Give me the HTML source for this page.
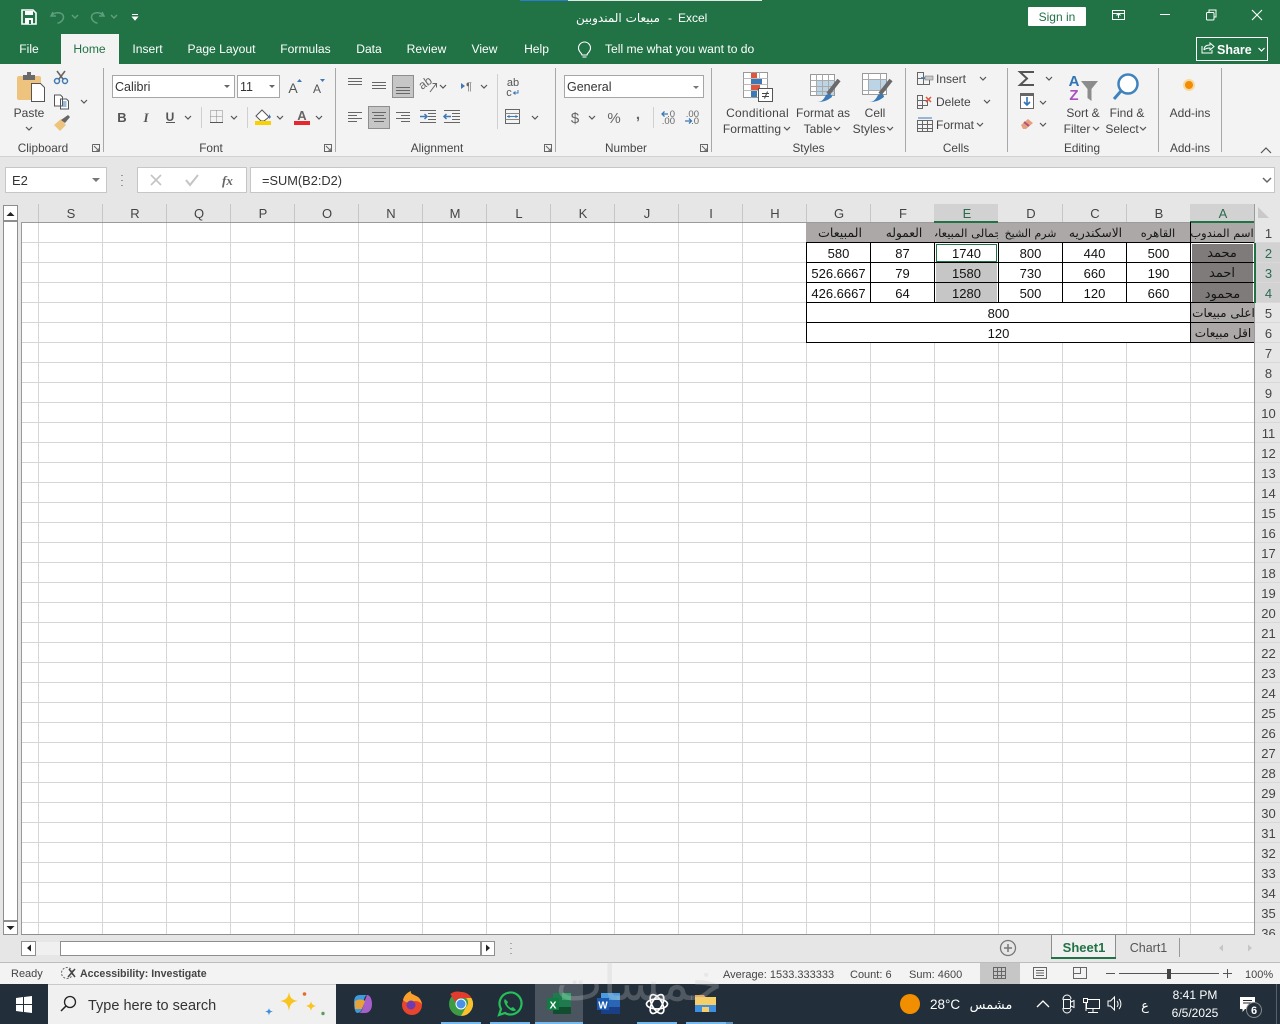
<!DOCTYPE html>
<html lang="en"><head><meta charset="utf-8"><title>Excel</title>
<style>
html,body{margin:0;padding:0;width:1280px;height:1024px;overflow:hidden;background:#e6e6e6}
svg{position:absolute;left:0;top:0;display:block}
text{font-family:"Liberation Sans",sans-serif;font-size:12px;fill:#3c3c3c;white-space:pre}
.m{text-anchor:middle}
.e{text-anchor:end}
.w{fill:#fff}
.tab{fill:#fff;font-size:12.1px;text-anchor:middle}
.rb{font-size:12px;fill:#444;text-anchor:middle}
.gl{font-size:11.8px;fill:#444;text-anchor:middle}
.ch{font-size:13px;fill:#444;text-anchor:middle}
.rh{font-size:13px;fill:#444;text-anchor:middle}
.rs{font-size:13px;fill:#2c6a50;text-anchor:middle}
.n{font-size:13px;fill:#111;text-anchor:middle}
.ar{font-family:"DejaVu Sans","Liberation Sans",sans-serif;font-size:11.5px;fill:#151515;text-anchor:middle}
.st{font-size:11px;fill:#444}
.chev{fill:none;stroke:#555;stroke-width:1.2}
.l{fill:none;stroke:#666;stroke-width:1}
</style></head>
<body>
<svg width="1280" height="1024" viewBox="0 0 1280 1024" xmlns="http://www.w3.org/2000/svg">
<defs>
<pattern id="grid" x="38" y="222" width="64" height="20" patternUnits="userSpaceOnUse"><rect width="1" height="20" fill="#d6d6d6"/><rect width="64" height="1" fill="#d6d6d6"/></pattern>
<clipPath id="ce"><rect x="935" y="223" width="63" height="19"/></clipPath>
<clipPath id="ca"><rect x="1191" y="223" width="63" height="19"/></clipPath>
<path id="c" d="M0 0l3 3 3-3" class="chev"/>
</defs>

<!-- base -->
<rect width="1280" height="64" fill="#217346"/>
<rect x="520" width="48" height="1" fill="#2b7cd3"/><rect x="568" width="194" height="1" fill="#dfe8e3"/>
<rect y="64" width="1280" height="92" fill="#f3f3f3"/>
<rect y="156" width="1280" height="1" fill="#d2d2d2"/>
<rect y="157" width="1280" height="47" fill="#e6e6e6"/>

<!-- Title bar -->
<g transform="translate(22,10)"><path d="M0 0h11l3 3v11H0z" fill="none" stroke="#fff" stroke-width="1.600"/><rect x="3" y="1" width="8" height="4" fill="#fff"/><rect x="3" y="8" width="8" height="6" fill="#fff"/><rect x="7" y="10" width="2" height="4" fill="#217346"/></g>
<g fill="none" stroke="#5f9e7c" stroke-width="1.500"><path d="M53 12l-2 4 5 0M51.500 16c3-5 12-4 12 1 0 3-3 6-6 6"/><path d="M102 12l2 4-5 0M103.500 16c-3-5-12-4-12 1 0 3 3 6 6 6"/><path d="M72 15l3 3 3-3M111 15l3 3 3-3"/></g>
<path d="M132 14.500h6M132.500 17h5l-2.500 3z" stroke="#fff" fill="#fff" stroke-width="1"/>
<text class="ar" x="618" y="22" style="fill:#fff;font-size:12px">مبيعات المندوبين</text>
<text x="668" y="22" class="w">-</text><text x="678" y="22" class="w" style="font-size:12px">Excel</text>
<rect x="1028" y="7" width="58" height="19" rx="1" fill="#fff"/><text x="1057" y="21" class="m" style="fill:#217346;font-size:12px">Sign in</text>
<g fill="none" stroke="#fff"><rect x="1112.500" y="10.500" width="12" height="9"/><path d="M1112.500 13.500h12M1118.500 18v-4M1116.500 15.500l2-2 2 2"/><path d="M1160 14.500h10"/><rect x="1206.500" y="12.500" width="7.500" height="7.500" rx="1"/><path d="M1209 12v-2h7v7h-2"/><path d="M1252 10l10 10M1262 10l-10 10" stroke-width="1.100"/></g>

<!-- Tabs -->
<rect x="61" y="34" width="58" height="30" fill="#f3f3f3"/>
<text class="tab" x="29" y="53">File</text>
<text class="tab" x="89.500" y="53" style="fill:#217346">Home</text>
<text class="tab" x="147.500" y="53">Insert</text>
<text class="tab" x="221.500" y="53">Page Layout</text>
<text class="tab" x="305.500" y="53">Formulas</text>
<text class="tab" x="369" y="53">Data</text>
<text class="tab" x="426.500" y="53">Review</text>
<text class="tab" x="484.500" y="53">View</text>
<text class="tab" x="536.500" y="53">Help</text>
<path d="M582 55c0-2-3.500-3-3.500-7a6 6 0 0 1 12 0c0 4-3.500 5-3.500 7zM582.500 57h4" fill="none" stroke="#fff" stroke-width="1.100"/>
<text x="605" y="53" class="w" style="font-size:12.1px">Tell me what you want to do</text>
<rect x="1196.500" y="37.500" width="71" height="23" fill="none" stroke="#fff"/>
<path d="M1202 46v7h10v-3M1204 50c0-4 3-5 6-5v-2l4 3.500-4 3.500v-2c-2 0-4 0-6 2" fill="none" stroke="#fff"/>
<text x="1217" y="54" class="w" style="font-size:12.500px;font-weight:bold">Share</text>
<path d="M1258.500 48l3 3 3-3" fill="none" stroke="#fff" stroke-width="1.200"/>

<!-- Ribbon seps -->
<g fill="#a8a8a8"><rect x="103" y="68" width="1" height="84"/><rect x="335" y="68" width="1" height="84"/><rect x="555" y="68" width="1" height="84"/><rect x="711" y="68" width="1" height="84"/><rect x="905" y="68" width="1" height="84"/><rect x="1007" y="68" width="1" height="84"/><rect x="1158" y="68" width="1" height="84"/><rect x="1221" y="68" width="1" height="84"/></g>
<g fill="#d0d0d0"><rect x="201" y="107" width="1" height="21"/><rect x="247" y="107" width="1" height="21"/><rect x="497" y="74" width="1" height="55"/><rect x="653" y="107" width="1" height="21"/></g>

<!-- Clipboard -->
<rect x="17" y="76" width="24" height="24" rx="2" fill="#eec37e"/><rect x="23" y="75" width="12" height="5" fill="#6b6b6b"/><rect x="27" y="72" width="4" height="4" fill="#6b6b6b"/>
<path d="M31.500 83.500h9l4 4v14h-13z" fill="#fff" stroke="#555"/>
<text class="rb" x="29" y="117">Paste</text><use href="#c" x="26" y="127"/>
<g fill="none" stroke="#3d79b5" stroke-width="1.500"><circle cx="57" cy="81" r="2.500"/><circle cx="65" cy="81" r="2.500"/></g><path d="M57 71l6 8M65 71l-6 8" stroke="#666" stroke-width="1.600"/>
<path d="M54.500 95h6l2 2v9h-8zM60.500 99h6l2 2v8h-8z" fill="#fff" stroke="#555"/><path d="M62.500 102h4M62.500 104h4M62.500 106h4" stroke="#3d79b5"/>
<use href="#c" x="81" y="100"/>
<path d="M54 125l7-6 5 6-6 6z" fill="#eec37e"/><path d="M61 120l7-5 2 2-5 6z" fill="#666"/>
<text class="gl" x="43" y="152">Clipboard</text>
<path d="M92.500 144.500h7v7M92.500 144.500v7h7M94 146l5 5M99 148v3h-3" fill="none" stroke="#666"/>

<!-- Font -->
<rect x="112.500" y="75.500" width="122" height="22" fill="#fff" stroke="#a6a6a6"/><text x="115" y="91" style="font-size:12.500px;fill:#333">Calibri</text><path d="M224 85h6l-3 3z" fill="#666"/>
<rect x="237.500" y="75.500" width="42" height="22" fill="#fff" stroke="#a6a6a6"/><text x="240" y="91" style="font-size:12.500px;fill:#333">11</text><path d="M269 85h6l-3 3z" fill="#666"/>
<text x="293" y="93" class="m" style="font-size:14px;fill:#555">A</text><path d="M297 82h5l-2.500-3z" fill="#3d79b5"/>
<text x="317" y="93" class="m" style="font-size:12px;fill:#555">A</text><path d="M320 79h5l-2.500 3z" fill="#3d79b5"/>
<text x="122" y="122" class="m" style="font-weight:bold;font-size:13px;fill:#555">B</text>
<text x="146" y="122" class="m" style="font-style:italic;font-size:13px;font-family:'Liberation Serif',serif;font-weight:bold;fill:#555">I</text>
<text x="170" y="121" class="m" style="font-weight:bold;font-size:12px;fill:#555">U</text><rect x="166" y="122" width="9" height="1" fill="#555"/>
<use href="#c" x="185" y="116"/>
<path d="M210.500 110.500h12v12h-12zM216.500 110.500v12M210.500 116.500h12" fill="none" stroke="#888" stroke-dasharray="1 1"/><rect x="210" y="122" width="13" height="1" fill="#555"/>
<use href="#c" x="231" y="116"/>
<path d="M256 116l6-6 7 7-5 4h-3z" fill="#fff" stroke="#555"/><path d="M269 114l2 3-2 2z" fill="#3d79b5"/><rect x="255" y="121" width="16" height="4" fill="#f9d000"/>
<use href="#c" x="277" y="116"/>
<text x="302" y="120" class="m" style="font-weight:bold;font-size:13px;fill:#666">A</text><rect x="294" y="121" width="16" height="4" fill="#e8262d"/>
<use href="#c" x="316" y="116"/>
<text class="gl" x="211" y="152">Font</text>
<path d="M324.500 144.500h7v7h-7zM326 146l5 5M331 148v3h-3" fill="none" stroke="#666"/>

<!-- Alignment -->
<rect x="392.500" y="75.500" width="21" height="22" fill="#c6c6c6" stroke="#8e8e8e"/><rect x="368.500" y="106.500" width="21" height="22" fill="#c6c6c6" stroke="#8e8e8e"/>
<g class="l" stroke="#666"><path d="M348 78.500h14M348 81.500h14M348 84.500h14M372 82.500h14M372 85.500h14M372 88.500h14M396 87.500h14M396 90.500h14M396 93.500h14"/>
<path d="M348 112.500h14M348 115.500h9M348 118.500h14M348 121.500h9M372 112.500h14M374 115.500h10M372 118.500h14M374 121.500h10M396 112.500h14M401 115.500h9M396 118.500h14M401 121.500h9"/>
<path d="M420 110.500h16M428 113.500h8M428 116.500h8M428 119.500h8M420 122.500h16M444 110.500h16M452 113.500h8M452 116.500h8M452 119.500h8M444 122.500h16"/></g>
<path d="M420 116.500h7M424.500 114l2.500 2.500-2.500 2.500" fill="none" stroke="#3d79b5" stroke-width="1.500"/>
<path d="M451 116.500h-7M446.500 114l-2.500 2.500 2.500 2.500" fill="none" stroke="#3d79b5" stroke-width="1.500"/>
<text x="422" y="90" style="font-size:12px;fill:#666" transform="rotate(-35 422 90)">ab</text><path d="M430 92l6-8M432.500 83.500h4v4" fill="none" stroke="#666"/>
<use href="#c" x="440" y="85"/>
<path d="M461 83l4 3-4 3z" fill="#3d79b5"/><text x="466" y="90" style="font-size:11px;fill:#666">¶</text>
<use href="#c" x="481" y="85"/>
<text x="513" y="86" class="m" style="font-size:11px;fill:#555">ab</text><text x="509" y="96" class="m" style="font-size:11px;fill:#555">c</text><path d="M518 90v3h-4M515.500 91.500l-2 1.500 2 1.500" fill="none" stroke="#3d79b5"/>
<rect x="505.500" y="109.500" width="14" height="14" fill="none" stroke="#666"/><path d="M505.500 113.500h14M505.500 119.500h14" stroke="#888"/><path d="M507 116.500h11M509 115v3M516 115v3" stroke="#3d79b5"/>
<use href="#c" x="532" y="116"/>
<text class="gl" x="437" y="152">Alignment</text>
<path d="M544.500 144.500h7v7h-7zM546 146l5 5M551 148v3h-3" fill="none" stroke="#666"/>

<!-- Number -->
<rect x="564.500" y="75.500" width="139" height="22" fill="#fff" stroke="#a6a6a6"/><text x="567" y="91" style="font-size:12.500px;fill:#333">General</text><path d="M693 86h6l-3 3z" fill="#777"/>
<text x="575" y="123" class="m" style="font-size:15px;fill:#666">$</text><use href="#c" x="589" y="116"/>
<text x="614" y="123" class="m" style="font-size:15px;fill:#666">%</text>
<text x="638" y="119" class="m" style="font-size:15px;font-weight:bold;fill:#666">,</text>
<text x="675" y="117" class="e" style="font-size:9.500px;fill:#666">.0</text><text x="675" y="124" class="e" style="font-size:9.500px;fill:#666">.00</text><path d="M668 114h-6M664.500 111.500l-2.500 2.500 2.500 2.500" fill="none" stroke="#3d79b5" stroke-width="1.300"/>
<text x="699" y="117" class="e" style="font-size:9.500px;fill:#666">.00</text><text x="699" y="124" class="e" style="font-size:9.500px;fill:#666">.0</text><path d="M685 121h6M689 118.500l2.500 2.500-2.500 2.500" fill="none" stroke="#3d79b5" stroke-width="1.300"/>
<text class="gl" x="626" y="152">Number</text>
<path d="M700.500 144.500h7v7h-7zM702 146l5 5M707 148v3h-3" fill="none" stroke="#666"/>

<!-- Styles -->
<g transform="translate(743,72)"><rect x=".5" y=".5" width="24" height="25" fill="#fff" stroke="#999"/><path d="M.5 6.500h24M.5 12.500h24M.5 18.500h24M8.500 .5v25M16.500 .5v25" stroke="#bbb"/><rect x="8" y="1" width="6" height="5" fill="#e0563b"/><rect x="8" y="7" width="11" height="5" fill="#3d79b5"/><rect x="8" y="13" width="9" height="5" fill="#e0563b"/><rect x="8" y="19" width="6" height="6" fill="#3d79b5"/><rect x="15.500" y="16.500" width="14" height="13" fill="#fff" stroke="#555"/><path d="M19 21.500h7M19 24.500h7M24.500 19.500l-3 7" stroke="#444" fill="none"/></g>
<g transform="translate(810,74)"><rect x=".5" y=".5" width="24" height="21" fill="#fff" stroke="#999"/><rect x="7" y="7" width="17" height="14" fill="#bcd5e6"/><path d="M.5 6.500h24M.5 12.500h24M.5 17.500h24M6.500 .5v21M12.500 .5v21M18.500 .5v21" stroke="#aaa"/><path d="M29 6L18 20" stroke="#6a6a6a" stroke-width="4"/><path d="M7 28c5 0 7-3 9-7 3-2 6-1 6 2-3 2-6 5-15 5z" fill="#3d79b5"/></g>
<g transform="translate(862,73)"><rect x=".5" y=".5" width="24" height="21" fill="#fff" stroke="#999"/><rect x="6" y="7" width="18" height="10" fill="#bcd5e6"/><path d="M.5 6.500h24M.5 17.500h24M6.500 .5v21M18.500 .5v21" stroke="#aaa"/><path d="M29 7L18 21" stroke="#6a6a6a" stroke-width="4"/><path d="M7 29c5 0 7-3 9-7 3-2 6-1 6 2-3 2-6 5-15 5z" fill="#3d79b5"/></g>
<text class="rb" x="757.500" y="117" style="letter-spacing:.25px">Conditional</text><text class="rb" x="752" y="133" style="letter-spacing:.1px">Formatting</text><use href="#c" x="784" y="127"/>
<text class="rb" x="823" y="117">Format as</text><text class="rb" x="818" y="133">Table</text><use href="#c" x="834" y="127"/>
<text class="rb" x="875" y="117">Cell</text><text class="rb" x="869" y="133">Styles</text><use href="#c" x="887" y="127"/>
<text class="gl" x="808.500" y="152">Styles</text>

<!-- Cells -->
<g fill="none" stroke="#666"><path d="M917.500 72.500h6v6h-6zM917.500 78.500h6v6h-6zM923.500 78.500h6v6h-6z"/><path d="M917.500 95.500h5v5h-5zM917.500 100.500h5v5h-5zM922.500 100.500h5v5h-5zM917.500 105.500h5v3h-5z"/><rect x="917.500" y="120.500" width="15" height="11"/><path d="M917.500 124.500h15M917.500 128.500h15M922.500 120.500v11M927.500 120.500v11"/></g>
<rect x="925" y="76" width="8" height="4" fill="#c8c8c8" stroke="#666" stroke-width=".5"/><path d="M925 78h-4" stroke="#3d79b5" stroke-width="1.500"/>
<path d="M926 97l5 5M931 97l-5 5" stroke="#e0563b" stroke-width="1.500"/>
<path d="M918 118h14" stroke="#3d79b5"/>
<text x="936" y="83" style="font-size:12px;fill:#444">Insert</text><use href="#c" x="980" y="77"/>
<text x="936" y="106" style="font-size:12px;fill:#444">Delete</text><use href="#c" x="984" y="100"/>
<text x="936" y="129" style="font-size:12px;fill:#444">Format</text><use href="#c" x="977" y="123"/>
<text class="gl" x="956" y="152">Cells</text>

<!-- Editing -->
<path d="M1034 72h-14l7 6.500-7 6.500h14" fill="none" stroke="#555" stroke-width="2"/><use href="#c" x="1046" y="77"/>
<rect x="1020.500" y="93.500" width="13" height="15" fill="#fff" stroke="#666"/><rect x="1020" y="93" width="14" height="3" fill="#666"/><path d="M1027 97v8M1024 102l3 3 3-3" fill="none" stroke="#2e75b6" stroke-width="1.600"/><use href="#c" x="1040" y="101"/>
<path d="M1021 125l7-6 5 4-7 6h-3z" fill="#e6a07e"/><path d="M1024 122l5 4" stroke="#b0507c" stroke-width="2"/><use href="#c" x="1040" y="123"/>
<text x="1074" y="86" class="m" style="font-size:15px;fill:#2e75b6;font-weight:bold">A</text><text x="1074" y="100" class="m" style="font-size:15px;fill:#a94fc0;font-weight:bold">Z</text>
<path d="M1081 81h17l-6.500 8v12l-4-3v-9z" fill="#8c8c8c"/>
<circle cx="1128" cy="84" r="9.500" fill="#fff" stroke="#3f82bd" stroke-width="2.500"/><path d="M1121 91l-7 8" stroke="#3f82bd" stroke-width="3"/>
<text class="rb" x="1083" y="117">Sort &amp;</text><text class="rb" x="1077" y="133">Filter</text><use href="#c" x="1093" y="127"/>
<text class="rb" x="1127" y="117">Find &amp;</text><text class="rb" x="1122" y="133">Select</text><use href="#c" x="1140" y="127"/>
<text class="gl" x="1082" y="152">Editing</text>

<!-- Addins -->
<circle cx="1189" cy="85" r="6" fill="#f8d9a0"/><circle cx="1189" cy="85" r="4" fill="#f28c00"/>
<text class="rb" x="1190" y="117">Add-ins</text><text class="gl" x="1190" y="152">Add-ins</text>
<path d="M1261 153l5-5 5 5" fill="none" stroke="#555" stroke-width="1.200"/>

<!-- Formula bar -->
<rect x="5.500" y="167.500" width="101" height="25" fill="#fff" stroke="#c6c6c6"/><text x="12" y="185" style="font-size:13px;fill:#333">E2</text><path d="M92 178h8l-4 4z" fill="#777"/>
<path d="M122 175v1M122 180v1M122 185v1" stroke="#999" stroke-width="2"/>
<rect x="137.500" y="167.500" width="109" height="25" fill="#fff" stroke="#c6c6c6"/>
<path d="M151 175l10 10M161 175l-10 10" stroke="#c4c4c4" stroke-width="1.700"/><path d="M186 180l4 5 8-10" fill="none" stroke="#c4c4c4" stroke-width="2"/>
<text x="222" y="185" style="font-family:'Liberation Serif',serif;font-style:italic;font-weight:bold;font-size:13px;fill:#666">fx</text>
<rect x="250.500" y="167.500" width="1024" height="25" fill="#fff" stroke="#c6c6c6"/><text x="262" y="185" style="font-size:12.800px;fill:#333">=SUM(B2:D2)</text>
<path d="M1263 178l4 4 4-4" fill="none" stroke="#666" stroke-width="1.500"/>

<!-- Sheet area -->
<rect x="0" y="204" width="1280" height="731" fill="#e6e6e6"/>
<rect x="22" y="222" width="1232" height="713" fill="#fff"/>
<rect x="22" y="222" width="1232" height="713" fill="url(#grid)"/>
<rect x="21" y="222" width="1233" height="1" fill="#9b9b9b"/><rect x="21" y="222" width="1" height="713" fill="#9b9b9b"/><rect x="1254" y="204" width="1" height="731" fill="#9b9b9b"/>
<!-- col header lines -->
<g fill="#c6c6c6"><rect x="38" y="204" width="1" height="18"/><rect x="102" y="204" width="1" height="18"/><rect x="166" y="204" width="1" height="18"/><rect x="230" y="204" width="1" height="18"/><rect x="294" y="204" width="1" height="18"/><rect x="358" y="204" width="1" height="18"/><rect x="422" y="204" width="1" height="18"/><rect x="486" y="204" width="1" height="18"/><rect x="550" y="204" width="1" height="18"/><rect x="614" y="204" width="1" height="18"/><rect x="678" y="204" width="1" height="18"/><rect x="742" y="204" width="1" height="18"/><rect x="806" y="204" width="1" height="18"/><rect x="870" y="204" width="1" height="18"/><rect x="1062" y="204" width="1" height="18"/><rect x="1126" y="204" width="1" height="18"/></g>
<rect x="934" y="204" width="64" height="17" fill="#d2d2d2"/><rect x="1190" y="204" width="64" height="17" fill="#d2d2d2"/>
<rect x="934" y="221" width="64" height="2" fill="#217346"/><rect x="1190" y="221" width="64" height="2" fill="#217346"/>
<path d="M1258 207v11h11z" fill="#c9c9c9"/>
<text class="ch" x="71" y="218">S</text><text class="ch" x="135" y="218">R</text><text class="ch" x="199" y="218">Q</text><text class="ch" x="263" y="218">P</text><text class="ch" x="327" y="218">O</text><text class="ch" x="391" y="218">N</text><text class="ch" x="455" y="218">M</text><text class="ch" x="519" y="218">L</text><text class="ch" x="583" y="218">K</text><text class="ch" x="647" y="218">J</text><text class="ch" x="711" y="218">I</text><text class="ch" x="775" y="218">H</text><text class="ch" x="839" y="218">G</text><text class="ch" x="903" y="218">F</text><text class="ch" x="967" y="218" style="fill:#2c6a50">E</text><text class="ch" x="1031" y="218">D</text><text class="ch" x="1095" y="218">C</text><text class="ch" x="1159" y="218">B</text><text class="ch" x="1223" y="218" style="fill:#2c6a50">A</text>

<!-- Row headers -->
<rect x="1255" y="243" width="25" height="60" fill="#d2d2d2"/>
<g fill="#d8d8d8"><rect x="1255" y="242" width="25" height="1"/><rect x="1255" y="262" width="25" height="1"/><rect x="1255" y="282" width="25" height="1"/><rect x="1255" y="302" width="25" height="1"/><rect x="1255" y="322" width="25" height="1"/><rect x="1255" y="342" width="25" height="1"/><rect x="1255" y="362" width="25" height="1"/><rect x="1255" y="382" width="25" height="1"/><rect x="1255" y="402" width="25" height="1"/><rect x="1255" y="422" width="25" height="1"/><rect x="1255" y="442" width="25" height="1"/><rect x="1255" y="462" width="25" height="1"/><rect x="1255" y="482" width="25" height="1"/><rect x="1255" y="502" width="25" height="1"/><rect x="1255" y="522" width="25" height="1"/><rect x="1255" y="542" width="25" height="1"/><rect x="1255" y="562" width="25" height="1"/><rect x="1255" y="582" width="25" height="1"/><rect x="1255" y="602" width="25" height="1"/><rect x="1255" y="622" width="25" height="1"/><rect x="1255" y="642" width="25" height="1"/><rect x="1255" y="662" width="25" height="1"/><rect x="1255" y="682" width="25" height="1"/><rect x="1255" y="702" width="25" height="1"/><rect x="1255" y="722" width="25" height="1"/><rect x="1255" y="742" width="25" height="1"/><rect x="1255" y="762" width="25" height="1"/><rect x="1255" y="782" width="25" height="1"/><rect x="1255" y="802" width="25" height="1"/><rect x="1255" y="822" width="25" height="1"/><rect x="1255" y="842" width="25" height="1"/><rect x="1255" y="862" width="25" height="1"/><rect x="1255" y="882" width="25" height="1"/><rect x="1255" y="902" width="25" height="1"/><rect x="1255" y="922" width="25" height="1"/></g>
<text class="rh" x="1268.500" y="238">1</text><text class="rs" x="1268.500" y="258">2</text><text class="rs" x="1268.500" y="278">3</text><text class="rs" x="1268.500" y="298">4</text><text class="rh" x="1268.500" y="318">5</text><text class="rh" x="1268.500" y="338">6</text><text class="rh" x="1268.500" y="358">7</text><text class="rh" x="1268.500" y="378">8</text><text class="rh" x="1268.500" y="398">9</text><text class="rh" x="1268.500" y="418">10</text><text class="rh" x="1268.500" y="438">11</text><text class="rh" x="1268.500" y="458">12</text><text class="rh" x="1268.500" y="478">13</text><text class="rh" x="1268.500" y="498">14</text><text class="rh" x="1268.500" y="518">15</text><text class="rh" x="1268.500" y="538">16</text><text class="rh" x="1268.500" y="558">17</text><text class="rh" x="1268.500" y="578">18</text><text class="rh" x="1268.500" y="598">19</text><text class="rh" x="1268.500" y="618">20</text><text class="rh" x="1268.500" y="638">21</text><text class="rh" x="1268.500" y="658">22</text><text class="rh" x="1268.500" y="678">23</text><text class="rh" x="1268.500" y="698">24</text><text class="rh" x="1268.500" y="718">25</text><text class="rh" x="1268.500" y="738">26</text><text class="rh" x="1268.500" y="758">27</text><text class="rh" x="1268.500" y="778">28</text><text class="rh" x="1268.500" y="798">29</text><text class="rh" x="1268.500" y="818">30</text><text class="rh" x="1268.500" y="838">31</text><text class="rh" x="1268.500" y="858">32</text><text class="rh" x="1268.500" y="878">33</text><text class="rh" x="1268.500" y="898">34</text><text class="rh" x="1268.500" y="918">35</text><text class="rh" x="1268.500" y="938">36</text>

<!-- Table -->
<rect x="806" y="223" width="448" height="19" fill="#aca8a8"/>
<rect x="1190" y="303" width="64" height="39" fill="#aca8a8"/>
<rect x="807" y="243" width="383" height="59" fill="#fff"/><rect x="807" y="303" width="383" height="39" fill="#fff"/>
<rect x="935" y="222" width="63" height="1" fill="#217346"/>
<rect x="935" y="263" width="63" height="39" fill="#c6c6c6"/>
<rect x="1191" y="243" width="63" height="59" fill="#7f7b7b"/>
<!-- white selection margins -->
<g fill="#fff"><rect x="935" y="243" width="1" height="59"/><rect x="997" y="243" width="1" height="59"/><rect x="1191" y="243" width="1" height="59"/><rect x="1253" y="243" width="1" height="59"/><rect x="1191" y="243" width="63" height="1"/></g>
<g fill="#000"><rect x="806" y="242" width="448" height="1"/><rect x="806" y="262" width="448" height="1"/><rect x="806" y="282" width="448" height="1"/><rect x="806" y="302" width="448" height="1"/><rect x="806" y="322" width="448" height="1"/><rect x="806" y="342" width="448" height="1"/>
<rect x="806" y="242" width="1" height="101"/><rect x="870" y="242" width="1" height="60"/><rect x="934" y="242" width="1" height="60"/><rect x="998" y="242" width="1" height="60"/><rect x="1062" y="242" width="1" height="60"/><rect x="1126" y="242" width="1" height="60"/><rect x="1190" y="222" width="1" height="121"/></g>
<rect x="936.500" y="244.500" width="60" height="17" fill="#fff" stroke="#217346" stroke-width="1"/>
<rect x="1254" y="243" width="2" height="60" fill="#217346"/>

<text class="ar" x="840" y="237" style="font-size:12.600px">المبيعات</text>
<text class="ar" x="904" y="237" style="font-size:12.200px">العموله</text>
<g clip-path="url(#ce)"><text class="ar" x="966" y="237">اجمالى المبيعات</text></g>
<text class="ar" x="1030.500" y="237" style="font-size:10.900px">شرم الشيخ</text>
<text class="ar" x="1095.500" y="237" style="font-size:12.200px">الاسكندريه</text>
<text class="ar" x="1158" y="237">القاهره</text>
<g clip-path="url(#ca)"><text class="ar" x="1222" y="237">اسم المندوب</text></g>
<text class="ar" x="1222" y="257" style="font-size:13px">محمد</text><text class="ar" x="1222" y="277" style="font-size:13px">احمد</text><text class="ar" x="1222.500" y="298" style="font-size:13px">محمود</text>
<text class="ar" x="1223.500" y="317" style="font-size:12px">اعلى مبيعات</text><text class="ar" x="1223" y="337" style="font-size:12px">اقل مبيعات</text>
<text class="n" x="838.500" y="258">580</text><text class="n" x="838.500" y="278">526.6667</text><text class="n" x="838.500" y="298">426.6667</text>
<text class="n" x="902.500" y="258">87</text><text class="n" x="902.500" y="278">79</text><text class="n" x="902.500" y="298">64</text>
<text class="n" x="966.500" y="258">1740</text><text class="n" x="966.500" y="278">1580</text><text class="n" x="966.500" y="298">1280</text>
<text class="n" x="1030.500" y="258">800</text><text class="n" x="1030.500" y="278">730</text><text class="n" x="1030.500" y="298">500</text>
<text class="n" x="1094.500" y="258">440</text><text class="n" x="1094.500" y="278">660</text><text class="n" x="1094.500" y="298">120</text>
<text class="n" x="1158.500" y="258">500</text><text class="n" x="1158.500" y="278">190</text><text class="n" x="1158.500" y="298">660</text>
<text class="n" x="998.500" y="318">800</text><text class="n" x="998.500" y="338">120</text>

<!-- V scrollbar -->
<rect x="3.500" y="205.500" width="14" height="15" fill="#fff" stroke="#8e8e8e"/><path d="M6.500 216l4-4 4 4z" fill="#222"/>
<rect x="3.500" y="221.500" width="14" height="699" fill="#fff" stroke="#8e8e8e"/>
<rect x="3.500" y="921.500" width="14" height="13" fill="#fff" stroke="#8e8e8e"/><path d="M6.500 926l4 4 4-4z" fill="#222"/>

<!-- Sheet tabs bar -->
<rect x="0" y="935" width="1280" height="27" fill="#e6e6e6"/>
<rect x="21" y="934" width="1234" height="1" fill="#8e8e8e"/>
<rect x="0" y="962" width="1280" height="1" fill="#bdbdbd"/>
<rect x="21.500" y="941.500" width="14" height="14" fill="#fff" stroke="#8e8e8e"/><path d="M31 944.500v7l-4-3.500z" fill="#222"/>
<rect x="36" y="942" width="24" height="13" fill="#f0f0f0"/>
<rect x="60.500" y="941.500" width="420" height="14" fill="#fff" stroke="#8e8e8e"/>
<rect x="481.500" y="941.500" width="13" height="14" fill="#fff" stroke="#8e8e8e"/><path d="M486 944.500v7l4-3.500z" fill="#222"/>
<path d="M511 943v1M511 948v1M511 953v1" stroke="#aaa" stroke-width="2"/>
<circle cx="1008" cy="948" r="7.500" fill="none" stroke="#777" stroke-width="1.300"/><path d="M1004 948h8M1008 944v8" stroke="#777" stroke-width="1.500"/>
<path d="M1051.500 958V934.500h64V958" fill="#f0f0f0" stroke="#8e8e8e"/><rect x="1051" y="957" width="65" height="2" fill="#217346"/>
<text x="1084" y="952" class="m" style="font-weight:bold;font-size:13px;fill:#217346">Sheet1</text>
<text x="1148.500" y="952" class="m" style="font-size:12.500px;fill:#555">Chart1</text>
<rect x="1179" y="938" width="1" height="19" fill="#999"/>
<path d="M1223 944.500v7l-4-3.500zM1248 944.500v7l4-3.500z" fill="#c6c6c6"/>

<!-- Status bar -->
<rect x="0" y="963" width="1280" height="21" fill="#f3f3f3"/>
<text class="st" x="11" y="977">Ready</text>
<circle cx="67" cy="973" r="5.500" fill="none" stroke="#666" stroke-dasharray="2 1.500"/><path d="M69 969l6 8M75 969l-7 8" stroke="#444" stroke-width="1.500"/>
<text class="st" x="80" y="977" style="font-weight:bold;font-size:10.600px">Accessibility: Investigate</text>
<text class="st" x="723" y="978">Average: 1533.333333</text>
<text class="st" x="850" y="978">Count: 6</text>
<text class="st" x="909" y="978">Sum: 4600</text>
<rect x="980" y="963" width="40" height="21" fill="#c6c6c6"/>
<path d="M993.500 967.500h12v11h-12zM997.500 967.500v11M1001.500 967.500v11M993.500 971.500h12M993.500 975.500h12" fill="none" stroke="#666"/>
<rect x="1033.500" y="967.500" width="13" height="11" fill="none" stroke="#666"/><path d="M1036 970.500h8M1036 973h8M1036 975.500h8" stroke="#666"/>
<path d="M1073.500 967.500h13v11h-13zM1080.500 967.500v6h-7" fill="none" stroke="#666"/>
<path d="M1106 973.500h9M1119 973.500h100M1223 973.500h9M1227.500 969v9" stroke="#555"/><rect x="1167" y="969" width="4" height="10" fill="#444"/>
<text class="st" x="1245" y="978">100%</text>

<!-- Taskbar -->
<rect x="0" y="984" width="1280" height="40" fill="#222e39"/>
<g fill="#fff"><path d="M16 998l7-1v7h-7zM24 997l8-1v8h-8zM16 1005h7v7l-7-1zM24 1005h8v8l-8-1z"/></g>
<rect x="48" y="985" width="288" height="39" fill="#f0f0f0"/><rect x="48" y="984" width="288" height="1" fill="#c9c9c9"/>
<circle cx="70" cy="1002" r="5.500" fill="none" stroke="#222" stroke-width="1.300"/><path d="M66 1006l-5 5" stroke="#222" stroke-width="1.500"/>
<text x="88" y="1010" style="font-size:14.500px;fill:#333">Type here to search</text>
<path d="M289 992c1 6 3 8 9 9-6 1-8 3-9 10-1-7-3-9-9-10 6-1 8-3 9-9z" fill="#f8c41e"/>
<path d="M311 1001c.5 3 1.500 4 5 5-3.500 1-4.500 2-5 5-.5-3-1.500-4-5-5 3.500-1 4.500-2 5-5z" fill="#f8c41e"/>
<path d="M269 1008c.5 2 1 3 4 3.500-3 .5-3.500 1.500-4 4-.5-2.500-1-3.500-4-4 3-.5 3.500-1.500 4-3.500z" fill="#3d8fe0"/>
<circle cx="304.500" cy="994" r="1.800" fill="#e56a2c"/><circle cx="323" cy="1013.500" r="1.700" fill="#5a9e5a"/>

<!-- copilot -->
<path d="M354 1003c0-6 2-8 6-8h7c-4 2-3 8-5 14-1 3-3 4-5 4-2-1-3-5-3-10z" fill="#3c9bdc"/><path d="M367 995c3 0 5 4 5 9 0 6-3 9-7 9h-6c4-1 4-8 6-13z" fill="#a561c9"/><path d="M355 1001c3-2 8-2 10 0l-3 8h-7z" fill="#e8a23a"/>
<!-- firefox -->
<circle cx="412" cy="1005" r="10" fill="#e8442e"/><path d="M403 1000c1-5 5-8 8-9-1 3 2 3 5 5 3 1 5 4 6 8-3-3-7-4-10-2-3 1-6 1-9-2z" fill="#f9a02a"/><circle cx="411" cy="1005" r="4.500" fill="#6e3bb0"/>
<!-- chrome -->
<circle cx="461" cy="1004" r="12" fill="#3d9b45"/><path d="M461 992a12 12 0 0 1 10.400 6H461a6 6 0 0 0-5.700 4l-5-8A12 12 0 0 1 461 992z" fill="#e33b2e"/><path d="M471.400 998A12 12 0 0 1 461 1016l5-9a6 6 0 0 0 0-9z" fill="#fbc02d"/><circle cx="461" cy="1004" r="5.500" fill="#fff"/><circle cx="461" cy="1004" r="4.500" fill="#4a8fe8"/>
<!-- whatsapp -->
<path d="M499 1015l2-6a11 11 0 1 1 4 4z" fill="none" stroke="#25c05a" stroke-width="2.200"/><path d="M505 999c-2 2 0 6 3 9s6 4 8 2l-3-3-2 1c-2-1-3-2-4-4l1-2z" fill="#25c05a"/>
<!-- excel -->
<rect x="535" y="984" width="48" height="38" fill="#4a555f"/>
<rect x="553" y="993" width="18" height="21" fill="#1f7a4d"/><rect x="562" y="993" width="9" height="7" fill="#33a56b"/><rect x="553" y="1007" width="18" height="7" fill="#124d30"/>
<rect x="547" y="998" width="12" height="12" fill="#107c41"/><text x="553" y="1008.500" class="m" style="font-size:10.500px;font-weight:bold;fill:#fff">X</text>
<!-- word -->
<rect x="601" y="993" width="19" height="21" fill="#2b65b5"/><rect x="601" y="993" width="19" height="7" fill="#4a9be0"/><rect x="601" y="1007" width="19" height="7" fill="#1a3f86"/>
<rect x="597" y="998" width="12" height="12" fill="#1a5ab0"/><text x="603" y="1008.500" class="m" style="font-size:10px;font-weight:bold;fill:#fff">W</text>
<!-- chatgpt -->
<g fill="none" stroke="#fff" stroke-width="1.700"><ellipse cx="657" cy="1004" rx="10.500" ry="5"/><ellipse cx="657" cy="1004" rx="10.500" ry="5" transform="rotate(60 657 1004)"/><ellipse cx="657" cy="1004" rx="10.500" ry="5" transform="rotate(120 657 1004)"/></g>
<!-- explorer -->
<path d="M695 995h9l2 3h-11z" fill="#f2a33a"/><rect x="695" y="997" width="21" height="15" fill="#f6cf68"/><rect x="695" y="1005" width="21" height="7" fill="#3f8fe0"/><rect x="702" y="1007" width="7" height="5" fill="#f6cf68"/>
<!-- underlines -->
<g fill="#76b9ed"><rect x="441" y="1022" width="40" height="2"/><rect x="490" y="1022" width="40" height="2"/><rect x="535" y="1022" width="48" height="2"/><rect x="637" y="1022" width="40" height="2"/><rect x="686" y="1022" width="40" height="2"/></g>
<rect x="726" y="1022" width="7" height="2" fill="#5b93c0"/>
<!-- watermark -->
<text x="639" y="1000" class="m" style="font-family:'DejaVu Sans',sans-serif;font-size:50px;fill:#c8c8c8;fill-opacity:.28;letter-spacing:2px">خمسات</text>
<!-- tray -->
<circle cx="910" cy="1004" r="10" fill="#f18f01"/>
<text x="930" y="1009" class="w" style="font-size:13.500px">28°C</text>
<text x="991" y="1009" class="m" style="font-family:'DejaVu Sans',sans-serif;font-size:13px;fill:#fff">مشمس</text>
<path d="M1037 1007l6-6 6 6" fill="none" stroke="#fff" stroke-width="1.300"/>
<path d="M1063 1000v-1a3 3 0 0 1 8 0M1063 1008v1a3 3 0 0 0 8 0" fill="none" stroke="#fff"/><rect x="1063.500" y="999.500" width="7" height="9" rx="1" fill="none" stroke="#fff"/><path d="M1071 1002l3-1.500v7l-3-1.500" fill="none" stroke="#fff"/>
<rect x="1086.500" y="999.500" width="13" height="9" fill="none" stroke="#fff"/><rect x="1083.500" y="998.500" width="4" height="4" fill="#222e39" stroke="#fff"/><path d="M1086 1002v9M1093 1009v3M1088 1012.500h10" stroke="#fff" fill="none"/>
<path d="M1108 1001h2.500l4-4v13l-4-4H1108zM1117 1001c1.500 2 1.500 4 0 6M1119 999c2.500 3 2.500 7 0 10" fill="none" stroke="#fff"/>
<text x="1145" y="1010" class="m" style="font-family:'DejaVu Sans',sans-serif;font-size:13px;fill:#fff">ع</text>
<text x="1195" y="999" class="m" style="font-size:12px;fill:#fff">8:41 PM</text>
<text x="1195" y="1017" class="m" style="font-size:12px;fill:#fff">6/5/2025</text>
<path d="M1240 997h15v12h-10l-2.500 3v-3H1240z" fill="#fff"/><path d="M1243 1000.500h9M1243 1003h9" stroke="#222e39"/>
<circle cx="1254" cy="1010" r="7.500" fill="#222e39" stroke="#888"/><text x="1254" y="1014" class="m" style="font-size:11px;font-weight:bold;fill:#fff">6</text>
<rect x="1276" y="984" width="1" height="40" fill="#55606a"/>
</svg>
</body></html>
